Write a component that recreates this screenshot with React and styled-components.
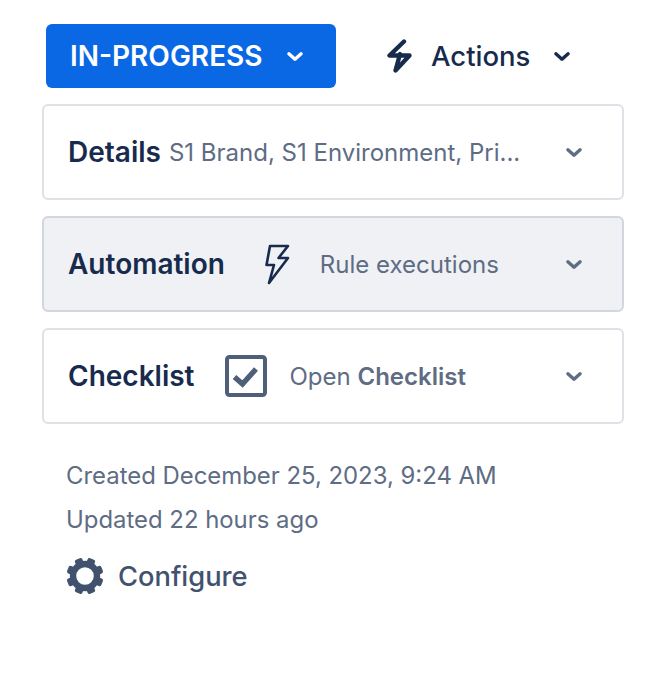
import React from "react";
import styled, { createGlobalStyle } from "styled-components";

const GlobalStyle = createGlobalStyle`
  body {
    margin: 0;
    background: #ffffff;
    font-family: Inter, "Noto Sans", sans-serif;
  }
`;

const Chevron = ({ size = 22, color = "currentColor" }) => (
  <svg width={size} height={size} viewBox="0 0 22 22" fill="none">
    <path
      d="M4.9 8.8 L11 14.2 L17.1 8.8"
      stroke={color}
      strokeWidth="3.4"
      strokeLinecap="round"
      strokeLinejoin="round"
    />
  </svg>
);

const ActionsBolt = () => (
  <svg width="28" height="34" viewBox="0 0 28 34" fill="none">
    <path
      d="M18 2.5 L3.5 16.5 L23.5 16.5 L9.5 31.5 L14 15"
      stroke="#172b4d"
      strokeWidth="4.4"
      strokeLinecap="round"
      strokeLinejoin="round"
    />
  </svg>
);

const OutlineBolt = () => (
  <svg width="26" height="42" viewBox="0 0 26 42" fill="none">
    <path
      d="M6 3 H24 L14.5 15 H24 L5 40 L10 22 H2.5 Z"
      stroke="#172b4d"
      strokeWidth="2.6"
      strokeLinejoin="round"
    />
  </svg>
);

const CheckIcon = () => (
  <svg width="42" height="42" viewBox="0 0 42 42" fill="none">
    <rect x="2" y="2" width="38" height="38" rx="2.5" stroke="#505f79" strokeWidth="4" />
    <path d="M9.5 22 L17.5 29 L31 14" stroke="#505f79" strokeWidth="5.4" strokeLinejoin="miter" />
  </svg>
);

const GearIcon = () => {
  const teeth = [0, 45, 90, 135, 180, 225, 270, 315];
  return (
    <svg width="38" height="38" viewBox="0 0 38 38" fill="none">
      <circle cx="19" cy="19" r="12" stroke="#42526e" strokeWidth="6.4" />
      {teeth.map((a) => (
        <rect
          key={a}
          x="15"
          y="0.5"
          width="8"
          height="8"
          rx="2"
          fill="#42526e"
          transform={`rotate(${a + 22.5} 19 19)`}
        />
      ))}
    </svg>
  );
};

const Page = styled.div`
  width: 652px;
  height: 692px;
  box-sizing: border-box;
  padding: 24px 28px 0 42px;
  overflow: hidden;
`;

const Toolbar = styled.div`
  display: flex;
  align-items: center;
  gap: 50px;
  padding-left: 4px;
  height: 64px;
  margin-bottom: 16px;
`;

const StatusButton = styled.button`
  display: flex;
  align-items: center;
  gap: 21px;
  width: 290px;
  height: 64px;
  box-sizing: border-box;
  padding: 0 24px;
  border: 0;
  border-radius: 6px;
  background: #0b68e4;
  color: #ffffff;
  font-family: inherit;
  font-size: 28px;
  font-weight: 600;
  white-space: nowrap;
`;

const ActionsButton = styled.div`
  display: flex;
  align-items: center;
  color: #172b4d;
  font-size: 27.5px;
  font-weight: 500;
`;

const ActionsLabel = styled.span`
  margin: 0 21px 0 17px;
`;

const Cards = styled.div`
  display: flex;
  flex-direction: column;
  gap: 16px;
`;

const Card = styled.div`
  display: flex;
  align-items: center;
  height: 96px;
  box-sizing: border-box;
  padding: 0 37px 0 24px;
  border: 2px solid ${(p) => (p.$active ? "#d3d6de" : "#dfe1e6")};
  border-radius: 6px;
  background: ${(p) => (p.$active ? "#f0f1f4" : "#ffffff")};
`;

const CardTitle = styled.span`
  color: #172b4d;
  font-size: 28px;
  font-weight: 600;
  white-space: nowrap;
`;

const CardBody = styled.div`
  display: flex;
  align-items: center;
  flex: 1;
  min-width: 0;
  margin-left: ${(p) => p.$offset}px;
  gap: ${(p) => p.$gap}px;
`;

const CardText = styled.span`
  color: #5e6c84;
  font-size: 24px;
  white-space: nowrap;

  b {
    font-weight: 600;
  }
`;

const Meta = styled.div`
  padding: 30px 0 0 24px;
`;

const MetaLine = styled.div`
  color: #5e6c84;
  font-size: 23.9px;
  line-height: 44px;
`;

const ConfigureRow = styled.div`
  display: flex;
  align-items: center;
  gap: 14px;
  margin-top: 15px;
  color: #42526e;
  font-size: 27.3px;
  font-weight: 500;
`;

export default function App() {
  return (
    <Page>
      <GlobalStyle />
      <Toolbar>
        <StatusButton>
          IN-PROGRESS
          <Chevron />
        </StatusButton>
        <ActionsButton>
          <ActionsBolt />
          <ActionsLabel>Actions</ActionsLabel>
          <Chevron />
        </ActionsButton>
      </Toolbar>
      <Cards>
        <Card>
          <CardTitle>Details</CardTitle>
          <CardBody $offset={8}>
            <CardText>S1 Brand, S1 Environment, Pri...</CardText>
          </CardBody>
          <Chevron color="#5e6c84" />
        </Card>
        <Card $active>
          <CardTitle>Automation</CardTitle>
          <CardBody $offset={39} $gap={30}>
            <OutlineBolt />
            <CardText>Rule executions</CardText>
          </CardBody>
          <Chevron color="#5e6c84" />
        </Card>
        <Card>
          <CardTitle>Checklist</CardTitle>
          <CardBody $offset={30} $gap={23}>
            <CheckIcon />
            <CardText>
              Open <b>Checklist</b>
            </CardText>
          </CardBody>
          <Chevron color="#5e6c84" />
        </Card>
      </Cards>
      <Meta>
        <MetaLine>Created December 25, 2023, 9:24 AM</MetaLine>
        <MetaLine>Updated 22 hours ago</MetaLine>
        <ConfigureRow>
          <GearIcon />
          Configure
        </ConfigureRow>
      </Meta>
    </Page>
  );
}
